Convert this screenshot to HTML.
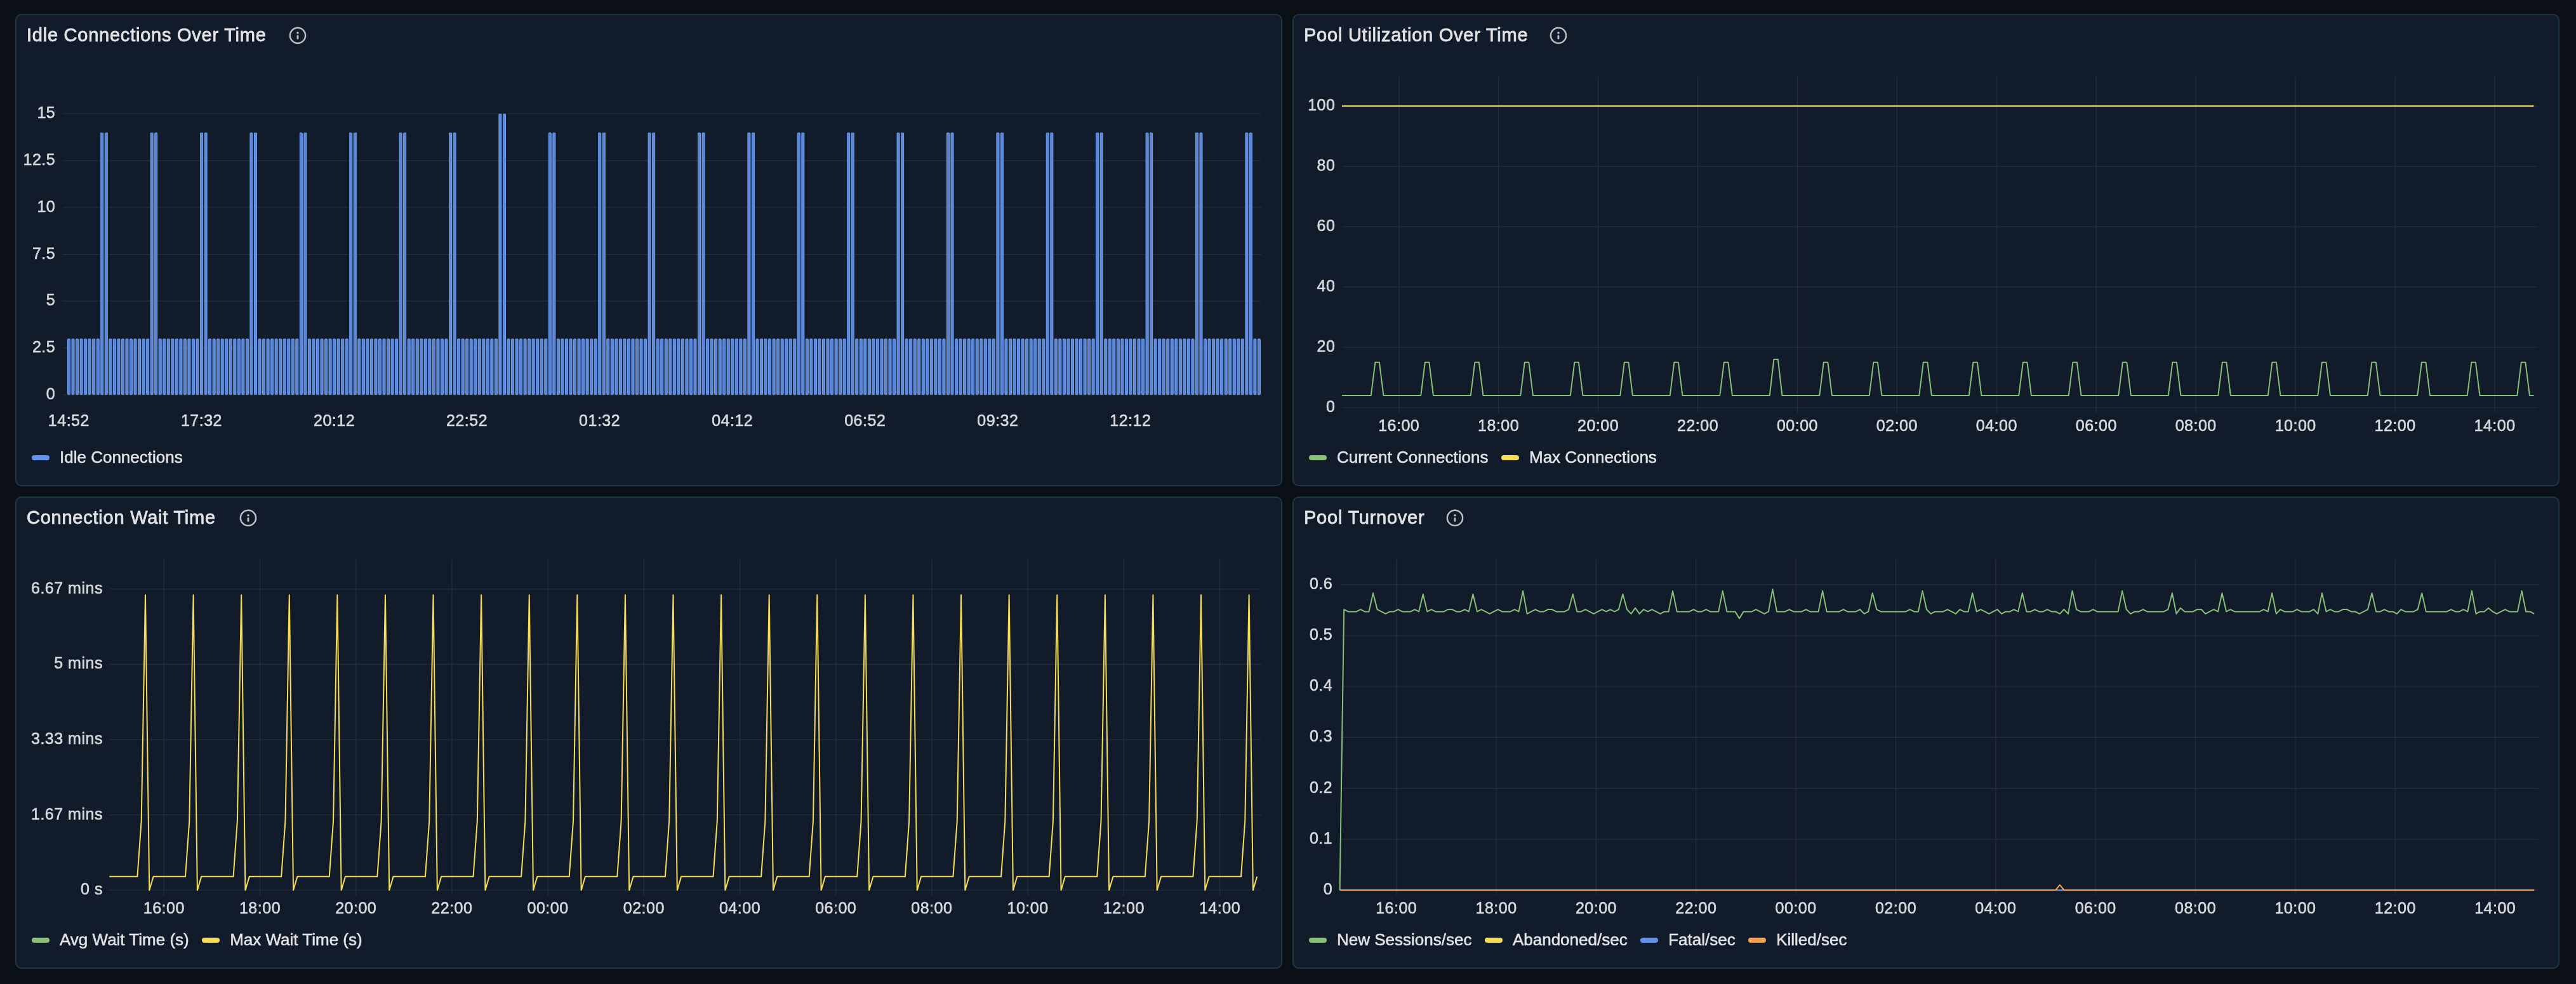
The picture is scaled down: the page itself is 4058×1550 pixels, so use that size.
<!DOCTYPE html><html><head><meta charset="utf-8"><title>Connection Pool Dashboard</title><style>
html,body{margin:0;padding:0}
body{width:4058px;height:1550px;background:#0b0f16;position:relative;overflow:hidden;font-family:"Liberation Sans",sans-serif}
.panel{position:absolute;width:1996px;height:744px;box-sizing:border-box;background:#121b2a;border:2px solid #1d3844;border-radius:10px}
.panel svg.chart{position:absolute;left:-2px;top:-2px;will-change:transform}
.title{position:absolute;left:16px;top:17px;height:30px;font-size:29px;line-height:29px;letter-spacing:0.76px;color:#e3e3e6;white-space:nowrap;-webkit-text-stroke:0.8px #e3e3e6;will-change:transform}
.legend{position:absolute;left:24px;top:678px;height:36px;display:flex;align-items:center;white-space:nowrap;will-change:transform}
.li{display:flex;align-items:center;margin-right:20.5px;font-size:26px;color:#e4e4e7;-webkit-text-stroke:0.5px #e4e4e7}
.sw{width:28px;height:8px;border-radius:4px;margin-right:16px;position:relative;top:1px}
.ax{font-size:25px;letter-spacing:0.5px;fill:#d8d9dc;stroke:#d8d9dc;stroke-width:0.6px}
</style></head><body><div class="panel" style="left:24px;top:22px"><svg class="chart" width="1996" height="744" viewBox="24 22 1996 744" font-family="Liberation Sans, sans-serif"><line x1="98" y1="622" x2="1986" y2="622" stroke="#252e3c" stroke-width="1.25"/><text x="87.2" y="629" text-anchor="end" class="ax">0</text><line x1="98" y1="548.2" x2="1986" y2="548.2" stroke="#252e3c" stroke-width="1.25"/><text x="87.2" y="555.2" text-anchor="end" class="ax">2.5</text><line x1="98" y1="474.4" x2="1986" y2="474.4" stroke="#252e3c" stroke-width="1.25"/><text x="87.2" y="481.4" text-anchor="end" class="ax">5</text><line x1="98" y1="400.6" x2="1986" y2="400.6" stroke="#252e3c" stroke-width="1.25"/><text x="87.2" y="407.6" text-anchor="end" class="ax">7.5</text><line x1="98" y1="326.8" x2="1986" y2="326.8" stroke="#252e3c" stroke-width="1.25"/><text x="87.2" y="333.8" text-anchor="end" class="ax">10</text><line x1="98" y1="253" x2="1986" y2="253" stroke="#252e3c" stroke-width="1.25"/><text x="87.2" y="260" text-anchor="end" class="ax">12.5</text><line x1="98" y1="179.2" x2="1986" y2="179.2" stroke="#252e3c" stroke-width="1.25"/><text x="87.2" y="186.2" text-anchor="end" class="ax">15</text><g fill="#5b86d3" stroke="#6fa0f7" stroke-width="1"><rect x="106.5" y="533.94" width="4" height="87.46" rx="0.6"/><rect x="113.03" y="533.94" width="4" height="87.46" rx="0.6"/><rect x="119.57" y="533.94" width="4" height="87.46" rx="0.6"/><rect x="126.1" y="533.94" width="4" height="87.46" rx="0.6"/><rect x="132.63" y="533.94" width="4" height="87.46" rx="0.6"/><rect x="139.16" y="533.94" width="4" height="87.46" rx="0.6"/><rect x="145.7" y="533.94" width="4" height="87.46" rx="0.6"/><rect x="152.23" y="533.94" width="4" height="87.46" rx="0.6"/><rect x="158.76" y="209.22" width="4" height="412.18" rx="0.6"/><rect x="165.3" y="209.22" width="4" height="412.18" rx="0.6"/><rect x="171.83" y="533.94" width="4" height="87.46" rx="0.6"/><rect x="178.36" y="533.94" width="4" height="87.46" rx="0.6"/><rect x="184.9" y="533.94" width="4" height="87.46" rx="0.6"/><rect x="191.43" y="533.94" width="4" height="87.46" rx="0.6"/><rect x="197.96" y="533.94" width="4" height="87.46" rx="0.6"/><rect x="204.5" y="533.94" width="4" height="87.46" rx="0.6"/><rect x="211.03" y="533.94" width="4" height="87.46" rx="0.6"/><rect x="217.56" y="533.94" width="4" height="87.46" rx="0.6"/><rect x="224.09" y="533.94" width="4" height="87.46" rx="0.6"/><rect x="230.63" y="533.94" width="4" height="87.46" rx="0.6"/><rect x="237.16" y="209.22" width="4" height="412.18" rx="0.6"/><rect x="243.69" y="209.22" width="4" height="412.18" rx="0.6"/><rect x="250.23" y="533.94" width="4" height="87.46" rx="0.6"/><rect x="256.76" y="533.94" width="4" height="87.46" rx="0.6"/><rect x="263.29" y="533.94" width="4" height="87.46" rx="0.6"/><rect x="269.83" y="533.94" width="4" height="87.46" rx="0.6"/><rect x="276.36" y="533.94" width="4" height="87.46" rx="0.6"/><rect x="282.89" y="533.94" width="4" height="87.46" rx="0.6"/><rect x="289.42" y="533.94" width="4" height="87.46" rx="0.6"/><rect x="295.96" y="533.94" width="4" height="87.46" rx="0.6"/><rect x="302.49" y="533.94" width="4" height="87.46" rx="0.6"/><rect x="309.02" y="533.94" width="4" height="87.46" rx="0.6"/><rect x="315.56" y="209.22" width="4" height="412.18" rx="0.6"/><rect x="322.09" y="209.22" width="4" height="412.18" rx="0.6"/><rect x="328.62" y="533.94" width="4" height="87.46" rx="0.6"/><rect x="335.15" y="533.94" width="4" height="87.46" rx="0.6"/><rect x="341.69" y="533.94" width="4" height="87.46" rx="0.6"/><rect x="348.22" y="533.94" width="4" height="87.46" rx="0.6"/><rect x="354.75" y="533.94" width="4" height="87.46" rx="0.6"/><rect x="361.29" y="533.94" width="4" height="87.46" rx="0.6"/><rect x="367.82" y="533.94" width="4" height="87.46" rx="0.6"/><rect x="374.35" y="533.94" width="4" height="87.46" rx="0.6"/><rect x="380.89" y="533.94" width="4" height="87.46" rx="0.6"/><rect x="387.42" y="533.94" width="4" height="87.46" rx="0.6"/><rect x="393.95" y="209.22" width="4" height="412.18" rx="0.6"/><rect x="400.49" y="209.22" width="4" height="412.18" rx="0.6"/><rect x="407.02" y="533.94" width="4" height="87.46" rx="0.6"/><rect x="413.55" y="533.94" width="4" height="87.46" rx="0.6"/><rect x="420.08" y="533.94" width="4" height="87.46" rx="0.6"/><rect x="426.62" y="533.94" width="4" height="87.46" rx="0.6"/><rect x="433.15" y="533.94" width="4" height="87.46" rx="0.6"/><rect x="439.68" y="533.94" width="4" height="87.46" rx="0.6"/><rect x="446.22" y="533.94" width="4" height="87.46" rx="0.6"/><rect x="452.75" y="533.94" width="4" height="87.46" rx="0.6"/><rect x="459.28" y="533.94" width="4" height="87.46" rx="0.6"/><rect x="465.81" y="533.94" width="4" height="87.46" rx="0.6"/><rect x="472.35" y="209.22" width="4" height="412.18" rx="0.6"/><rect x="478.88" y="209.22" width="4" height="412.18" rx="0.6"/><rect x="485.41" y="533.94" width="4" height="87.46" rx="0.6"/><rect x="491.95" y="533.94" width="4" height="87.46" rx="0.6"/><rect x="498.48" y="533.94" width="4" height="87.46" rx="0.6"/><rect x="505.01" y="533.94" width="4" height="87.46" rx="0.6"/><rect x="511.55" y="533.94" width="4" height="87.46" rx="0.6"/><rect x="518.08" y="533.94" width="4" height="87.46" rx="0.6"/><rect x="524.61" y="533.94" width="4" height="87.46" rx="0.6"/><rect x="531.14" y="533.94" width="4" height="87.46" rx="0.6"/><rect x="537.68" y="533.94" width="4" height="87.46" rx="0.6"/><rect x="544.21" y="533.94" width="4" height="87.46" rx="0.6"/><rect x="550.74" y="209.22" width="4" height="412.18" rx="0.6"/><rect x="557.28" y="209.22" width="4" height="412.18" rx="0.6"/><rect x="563.81" y="533.94" width="4" height="87.46" rx="0.6"/><rect x="570.34" y="533.94" width="4" height="87.46" rx="0.6"/><rect x="576.88" y="533.94" width="4" height="87.46" rx="0.6"/><rect x="583.41" y="533.94" width="4" height="87.46" rx="0.6"/><rect x="589.94" y="533.94" width="4" height="87.46" rx="0.6"/><rect x="596.48" y="533.94" width="4" height="87.46" rx="0.6"/><rect x="603.01" y="533.94" width="4" height="87.46" rx="0.6"/><rect x="609.54" y="533.94" width="4" height="87.46" rx="0.6"/><rect x="616.07" y="533.94" width="4" height="87.46" rx="0.6"/><rect x="622.61" y="533.94" width="4" height="87.46" rx="0.6"/><rect x="629.14" y="209.22" width="4" height="412.18" rx="0.6"/><rect x="635.67" y="209.22" width="4" height="412.18" rx="0.6"/><rect x="642.21" y="533.94" width="4" height="87.46" rx="0.6"/><rect x="648.74" y="533.94" width="4" height="87.46" rx="0.6"/><rect x="655.27" y="533.94" width="4" height="87.46" rx="0.6"/><rect x="661.81" y="533.94" width="4" height="87.46" rx="0.6"/><rect x="668.34" y="533.94" width="4" height="87.46" rx="0.6"/><rect x="674.87" y="533.94" width="4" height="87.46" rx="0.6"/><rect x="681.4" y="533.94" width="4" height="87.46" rx="0.6"/><rect x="687.94" y="533.94" width="4" height="87.46" rx="0.6"/><rect x="694.47" y="533.94" width="4" height="87.46" rx="0.6"/><rect x="701" y="533.94" width="4" height="87.46" rx="0.6"/><rect x="707.54" y="209.22" width="4" height="412.18" rx="0.6"/><rect x="714.07" y="209.22" width="4" height="412.18" rx="0.6"/><rect x="720.6" y="533.94" width="4" height="87.46" rx="0.6"/><rect x="727.13" y="533.94" width="4" height="87.46" rx="0.6"/><rect x="733.67" y="533.94" width="4" height="87.46" rx="0.6"/><rect x="740.2" y="533.94" width="4" height="87.46" rx="0.6"/><rect x="746.73" y="533.94" width="4" height="87.46" rx="0.6"/><rect x="753.27" y="533.94" width="4" height="87.46" rx="0.6"/><rect x="759.8" y="533.94" width="4" height="87.46" rx="0.6"/><rect x="766.33" y="533.94" width="4" height="87.46" rx="0.6"/><rect x="772.87" y="533.94" width="4" height="87.46" rx="0.6"/><rect x="779.4" y="533.94" width="4" height="87.46" rx="0.6"/><rect x="785.93" y="179.7" width="4" height="441.7" rx="0.6"/><rect x="792.47" y="179.7" width="4" height="441.7" rx="0.6"/><rect x="799" y="533.94" width="4" height="87.46" rx="0.6"/><rect x="805.53" y="533.94" width="4" height="87.46" rx="0.6"/><rect x="812.06" y="533.94" width="4" height="87.46" rx="0.6"/><rect x="818.6" y="533.94" width="4" height="87.46" rx="0.6"/><rect x="825.13" y="533.94" width="4" height="87.46" rx="0.6"/><rect x="831.66" y="533.94" width="4" height="87.46" rx="0.6"/><rect x="838.2" y="533.94" width="4" height="87.46" rx="0.6"/><rect x="844.73" y="533.94" width="4" height="87.46" rx="0.6"/><rect x="851.26" y="533.94" width="4" height="87.46" rx="0.6"/><rect x="857.8" y="533.94" width="4" height="87.46" rx="0.6"/><rect x="864.33" y="209.22" width="4" height="412.18" rx="0.6"/><rect x="870.86" y="209.22" width="4" height="412.18" rx="0.6"/><rect x="877.39" y="533.94" width="4" height="87.46" rx="0.6"/><rect x="883.93" y="533.94" width="4" height="87.46" rx="0.6"/><rect x="890.46" y="533.94" width="4" height="87.46" rx="0.6"/><rect x="896.99" y="533.94" width="4" height="87.46" rx="0.6"/><rect x="903.53" y="533.94" width="4" height="87.46" rx="0.6"/><rect x="910.06" y="533.94" width="4" height="87.46" rx="0.6"/><rect x="916.59" y="533.94" width="4" height="87.46" rx="0.6"/><rect x="923.12" y="533.94" width="4" height="87.46" rx="0.6"/><rect x="929.66" y="533.94" width="4" height="87.46" rx="0.6"/><rect x="936.19" y="533.94" width="4" height="87.46" rx="0.6"/><rect x="942.72" y="209.22" width="4" height="412.18" rx="0.6"/><rect x="949.26" y="209.22" width="4" height="412.18" rx="0.6"/><rect x="955.79" y="533.94" width="4" height="87.46" rx="0.6"/><rect x="962.32" y="533.94" width="4" height="87.46" rx="0.6"/><rect x="968.86" y="533.94" width="4" height="87.46" rx="0.6"/><rect x="975.39" y="533.94" width="4" height="87.46" rx="0.6"/><rect x="981.92" y="533.94" width="4" height="87.46" rx="0.6"/><rect x="988.46" y="533.94" width="4" height="87.46" rx="0.6"/><rect x="994.99" y="533.94" width="4" height="87.46" rx="0.6"/><rect x="1001.52" y="533.94" width="4" height="87.46" rx="0.6"/><rect x="1008.05" y="533.94" width="4" height="87.46" rx="0.6"/><rect x="1014.59" y="533.94" width="4" height="87.46" rx="0.6"/><rect x="1021.12" y="209.22" width="4" height="412.18" rx="0.6"/><rect x="1027.65" y="209.22" width="4" height="412.18" rx="0.6"/><rect x="1034.19" y="533.94" width="4" height="87.46" rx="0.6"/><rect x="1040.72" y="533.94" width="4" height="87.46" rx="0.6"/><rect x="1047.25" y="533.94" width="4" height="87.46" rx="0.6"/><rect x="1053.79" y="533.94" width="4" height="87.46" rx="0.6"/><rect x="1060.32" y="533.94" width="4" height="87.46" rx="0.6"/><rect x="1066.85" y="533.94" width="4" height="87.46" rx="0.6"/><rect x="1073.38" y="533.94" width="4" height="87.46" rx="0.6"/><rect x="1079.92" y="533.94" width="4" height="87.46" rx="0.6"/><rect x="1086.45" y="533.94" width="4" height="87.46" rx="0.6"/><rect x="1092.98" y="533.94" width="4" height="87.46" rx="0.6"/><rect x="1099.52" y="209.22" width="4" height="412.18" rx="0.6"/><rect x="1106.05" y="209.22" width="4" height="412.18" rx="0.6"/><rect x="1112.58" y="533.94" width="4" height="87.46" rx="0.6"/><rect x="1119.12" y="533.94" width="4" height="87.46" rx="0.6"/><rect x="1125.65" y="533.94" width="4" height="87.46" rx="0.6"/><rect x="1132.18" y="533.94" width="4" height="87.46" rx="0.6"/><rect x="1138.71" y="533.94" width="4" height="87.46" rx="0.6"/><rect x="1145.25" y="533.94" width="4" height="87.46" rx="0.6"/><rect x="1151.78" y="533.94" width="4" height="87.46" rx="0.6"/><rect x="1158.31" y="533.94" width="4" height="87.46" rx="0.6"/><rect x="1164.85" y="533.94" width="4" height="87.46" rx="0.6"/><rect x="1171.38" y="533.94" width="4" height="87.46" rx="0.6"/><rect x="1177.91" y="209.22" width="4" height="412.18" rx="0.6"/><rect x="1184.45" y="209.22" width="4" height="412.18" rx="0.6"/><rect x="1190.98" y="533.94" width="4" height="87.46" rx="0.6"/><rect x="1197.51" y="533.94" width="4" height="87.46" rx="0.6"/><rect x="1204.04" y="533.94" width="4" height="87.46" rx="0.6"/><rect x="1210.58" y="533.94" width="4" height="87.46" rx="0.6"/><rect x="1217.11" y="533.94" width="4" height="87.46" rx="0.6"/><rect x="1223.64" y="533.94" width="4" height="87.46" rx="0.6"/><rect x="1230.18" y="533.94" width="4" height="87.46" rx="0.6"/><rect x="1236.71" y="533.94" width="4" height="87.46" rx="0.6"/><rect x="1243.24" y="533.94" width="4" height="87.46" rx="0.6"/><rect x="1249.78" y="533.94" width="4" height="87.46" rx="0.6"/><rect x="1256.31" y="209.22" width="4" height="412.18" rx="0.6"/><rect x="1262.84" y="209.22" width="4" height="412.18" rx="0.6"/><rect x="1269.37" y="533.94" width="4" height="87.46" rx="0.6"/><rect x="1275.91" y="533.94" width="4" height="87.46" rx="0.6"/><rect x="1282.44" y="533.94" width="4" height="87.46" rx="0.6"/><rect x="1288.97" y="533.94" width="4" height="87.46" rx="0.6"/><rect x="1295.51" y="533.94" width="4" height="87.46" rx="0.6"/><rect x="1302.04" y="533.94" width="4" height="87.46" rx="0.6"/><rect x="1308.57" y="533.94" width="4" height="87.46" rx="0.6"/><rect x="1315.11" y="533.94" width="4" height="87.46" rx="0.6"/><rect x="1321.64" y="533.94" width="4" height="87.46" rx="0.6"/><rect x="1328.17" y="533.94" width="4" height="87.46" rx="0.6"/><rect x="1334.7" y="209.22" width="4" height="412.18" rx="0.6"/><rect x="1341.24" y="209.22" width="4" height="412.18" rx="0.6"/><rect x="1347.77" y="533.94" width="4" height="87.46" rx="0.6"/><rect x="1354.3" y="533.94" width="4" height="87.46" rx="0.6"/><rect x="1360.84" y="533.94" width="4" height="87.46" rx="0.6"/><rect x="1367.37" y="533.94" width="4" height="87.46" rx="0.6"/><rect x="1373.9" y="533.94" width="4" height="87.46" rx="0.6"/><rect x="1380.44" y="533.94" width="4" height="87.46" rx="0.6"/><rect x="1386.97" y="533.94" width="4" height="87.46" rx="0.6"/><rect x="1393.5" y="533.94" width="4" height="87.46" rx="0.6"/><rect x="1400.03" y="533.94" width="4" height="87.46" rx="0.6"/><rect x="1406.57" y="533.94" width="4" height="87.46" rx="0.6"/><rect x="1413.1" y="209.22" width="4" height="412.18" rx="0.6"/><rect x="1419.63" y="209.22" width="4" height="412.18" rx="0.6"/><rect x="1426.17" y="533.94" width="4" height="87.46" rx="0.6"/><rect x="1432.7" y="533.94" width="4" height="87.46" rx="0.6"/><rect x="1439.23" y="533.94" width="4" height="87.46" rx="0.6"/><rect x="1445.77" y="533.94" width="4" height="87.46" rx="0.6"/><rect x="1452.3" y="533.94" width="4" height="87.46" rx="0.6"/><rect x="1458.83" y="533.94" width="4" height="87.46" rx="0.6"/><rect x="1465.36" y="533.94" width="4" height="87.46" rx="0.6"/><rect x="1471.9" y="533.94" width="4" height="87.46" rx="0.6"/><rect x="1478.43" y="533.94" width="4" height="87.46" rx="0.6"/><rect x="1484.96" y="533.94" width="4" height="87.46" rx="0.6"/><rect x="1491.5" y="209.22" width="4" height="412.18" rx="0.6"/><rect x="1498.03" y="209.22" width="4" height="412.18" rx="0.6"/><rect x="1504.56" y="533.94" width="4" height="87.46" rx="0.6"/><rect x="1511.1" y="533.94" width="4" height="87.46" rx="0.6"/><rect x="1517.63" y="533.94" width="4" height="87.46" rx="0.6"/><rect x="1524.16" y="533.94" width="4" height="87.46" rx="0.6"/><rect x="1530.69" y="533.94" width="4" height="87.46" rx="0.6"/><rect x="1537.23" y="533.94" width="4" height="87.46" rx="0.6"/><rect x="1543.76" y="533.94" width="4" height="87.46" rx="0.6"/><rect x="1550.29" y="533.94" width="4" height="87.46" rx="0.6"/><rect x="1556.83" y="533.94" width="4" height="87.46" rx="0.6"/><rect x="1563.36" y="533.94" width="4" height="87.46" rx="0.6"/><rect x="1569.89" y="209.22" width="4" height="412.18" rx="0.6"/><rect x="1576.43" y="209.22" width="4" height="412.18" rx="0.6"/><rect x="1582.96" y="533.94" width="4" height="87.46" rx="0.6"/><rect x="1589.49" y="533.94" width="4" height="87.46" rx="0.6"/><rect x="1596.02" y="533.94" width="4" height="87.46" rx="0.6"/><rect x="1602.56" y="533.94" width="4" height="87.46" rx="0.6"/><rect x="1609.09" y="533.94" width="4" height="87.46" rx="0.6"/><rect x="1615.62" y="533.94" width="4" height="87.46" rx="0.6"/><rect x="1622.16" y="533.94" width="4" height="87.46" rx="0.6"/><rect x="1628.69" y="533.94" width="4" height="87.46" rx="0.6"/><rect x="1635.22" y="533.94" width="4" height="87.46" rx="0.6"/><rect x="1641.76" y="533.94" width="4" height="87.46" rx="0.6"/><rect x="1648.29" y="209.22" width="4" height="412.18" rx="0.6"/><rect x="1654.82" y="209.22" width="4" height="412.18" rx="0.6"/><rect x="1661.35" y="533.94" width="4" height="87.46" rx="0.6"/><rect x="1667.89" y="533.94" width="4" height="87.46" rx="0.6"/><rect x="1674.42" y="533.94" width="4" height="87.46" rx="0.6"/><rect x="1680.95" y="533.94" width="4" height="87.46" rx="0.6"/><rect x="1687.49" y="533.94" width="4" height="87.46" rx="0.6"/><rect x="1694.02" y="533.94" width="4" height="87.46" rx="0.6"/><rect x="1700.55" y="533.94" width="4" height="87.46" rx="0.6"/><rect x="1707.09" y="533.94" width="4" height="87.46" rx="0.6"/><rect x="1713.62" y="533.94" width="4" height="87.46" rx="0.6"/><rect x="1720.15" y="533.94" width="4" height="87.46" rx="0.6"/><rect x="1726.68" y="209.22" width="4" height="412.18" rx="0.6"/><rect x="1733.22" y="209.22" width="4" height="412.18" rx="0.6"/><rect x="1739.75" y="533.94" width="4" height="87.46" rx="0.6"/><rect x="1746.28" y="533.94" width="4" height="87.46" rx="0.6"/><rect x="1752.82" y="533.94" width="4" height="87.46" rx="0.6"/><rect x="1759.35" y="533.94" width="4" height="87.46" rx="0.6"/><rect x="1765.88" y="533.94" width="4" height="87.46" rx="0.6"/><rect x="1772.42" y="533.94" width="4" height="87.46" rx="0.6"/><rect x="1778.95" y="533.94" width="4" height="87.46" rx="0.6"/><rect x="1785.48" y="533.94" width="4" height="87.46" rx="0.6"/><rect x="1792.01" y="533.94" width="4" height="87.46" rx="0.6"/><rect x="1798.55" y="533.94" width="4" height="87.46" rx="0.6"/><rect x="1805.08" y="209.22" width="4" height="412.18" rx="0.6"/><rect x="1811.61" y="209.22" width="4" height="412.18" rx="0.6"/><rect x="1818.15" y="533.94" width="4" height="87.46" rx="0.6"/><rect x="1824.68" y="533.94" width="4" height="87.46" rx="0.6"/><rect x="1831.21" y="533.94" width="4" height="87.46" rx="0.6"/><rect x="1837.75" y="533.94" width="4" height="87.46" rx="0.6"/><rect x="1844.28" y="533.94" width="4" height="87.46" rx="0.6"/><rect x="1850.81" y="533.94" width="4" height="87.46" rx="0.6"/><rect x="1857.34" y="533.94" width="4" height="87.46" rx="0.6"/><rect x="1863.88" y="533.94" width="4" height="87.46" rx="0.6"/><rect x="1870.41" y="533.94" width="4" height="87.46" rx="0.6"/><rect x="1876.94" y="533.94" width="4" height="87.46" rx="0.6"/><rect x="1883.48" y="209.22" width="4" height="412.18" rx="0.6"/><rect x="1890.01" y="209.22" width="4" height="412.18" rx="0.6"/><rect x="1896.54" y="533.94" width="4" height="87.46" rx="0.6"/><rect x="1903.08" y="533.94" width="4" height="87.46" rx="0.6"/><rect x="1909.61" y="533.94" width="4" height="87.46" rx="0.6"/><rect x="1916.14" y="533.94" width="4" height="87.46" rx="0.6"/><rect x="1922.67" y="533.94" width="4" height="87.46" rx="0.6"/><rect x="1929.21" y="533.94" width="4" height="87.46" rx="0.6"/><rect x="1935.74" y="533.94" width="4" height="87.46" rx="0.6"/><rect x="1942.27" y="533.94" width="4" height="87.46" rx="0.6"/><rect x="1948.81" y="533.94" width="4" height="87.46" rx="0.6"/><rect x="1955.34" y="533.94" width="4" height="87.46" rx="0.6"/><rect x="1961.87" y="209.22" width="4" height="412.18" rx="0.6"/><rect x="1968.41" y="209.22" width="4" height="412.18" rx="0.6"/><rect x="1974.94" y="533.94" width="4" height="87.46" rx="0.6"/><rect x="1981.47" y="533.94" width="4" height="87.46" rx="0.6"/></g><text x="108.4" y="671" text-anchor="middle" class="ax">14:52</text><text x="317.46" y="671" text-anchor="middle" class="ax">17:32</text><text x="526.52" y="671" text-anchor="middle" class="ax">20:12</text><text x="735.58" y="671" text-anchor="middle" class="ax">22:52</text><text x="944.64" y="671" text-anchor="middle" class="ax">01:32</text><text x="1153.7" y="671" text-anchor="middle" class="ax">04:12</text><text x="1362.76" y="671" text-anchor="middle" class="ax">06:52</text><text x="1571.82" y="671" text-anchor="middle" class="ax">09:32</text><text x="1780.88" y="671" text-anchor="middle" class="ax">12:12</text><g class="info"><circle cx="469" cy="55.9" r="12.1" fill="none" stroke="#bcbec3" stroke-width="2.5"/><circle cx="469" cy="51.699999999999996" r="1.75" fill="#bcbec3"/><rect x="467.5" y="55.3" width="2.9" height="6.6" rx="1.4" fill="#bcbec3"/></g></svg><div class="title">Idle Connections Over Time</div><div class="legend"><div class="li"><span class="sw" style="background:#6494f0"></span>Idle Connections</div></div></div><div class="panel" style="left:2036px;top:22px"><svg class="chart" width="1996" height="744" viewBox="2036 22 1996 744" font-family="Liberation Sans, sans-serif"><line x1="2203.7" y1="121" x2="2203.7" y2="650" stroke="#252e3c" stroke-width="1.25"/><line x1="2360.64" y1="121" x2="2360.64" y2="650" stroke="#252e3c" stroke-width="1.25"/><line x1="2517.58" y1="121" x2="2517.58" y2="650" stroke="#252e3c" stroke-width="1.25"/><line x1="2674.52" y1="121" x2="2674.52" y2="650" stroke="#252e3c" stroke-width="1.25"/><line x1="2831.46" y1="121" x2="2831.46" y2="650" stroke="#252e3c" stroke-width="1.25"/><line x1="2988.4" y1="121" x2="2988.4" y2="650" stroke="#252e3c" stroke-width="1.25"/><line x1="3145.34" y1="121" x2="3145.34" y2="650" stroke="#252e3c" stroke-width="1.25"/><line x1="3302.28" y1="121" x2="3302.28" y2="650" stroke="#252e3c" stroke-width="1.25"/><line x1="3459.22" y1="121" x2="3459.22" y2="650" stroke="#252e3c" stroke-width="1.25"/><line x1="3616.16" y1="121" x2="3616.16" y2="650" stroke="#252e3c" stroke-width="1.25"/><line x1="3773.1" y1="121" x2="3773.1" y2="650" stroke="#252e3c" stroke-width="1.25"/><line x1="3930.04" y1="121" x2="3930.04" y2="650" stroke="#252e3c" stroke-width="1.25"/><line x1="2114" y1="642" x2="3998" y2="642" stroke="#252e3c" stroke-width="1.25"/><text x="2103.4" y="649" text-anchor="end" class="ax">0</text><line x1="2114" y1="547" x2="3998" y2="547" stroke="#252e3c" stroke-width="1.25"/><text x="2103.4" y="554" text-anchor="end" class="ax">20</text><line x1="2114" y1="452" x2="3998" y2="452" stroke="#252e3c" stroke-width="1.25"/><text x="2103.4" y="459" text-anchor="end" class="ax">40</text><line x1="2114" y1="357" x2="3998" y2="357" stroke="#252e3c" stroke-width="1.25"/><text x="2103.4" y="364" text-anchor="end" class="ax">60</text><line x1="2114" y1="262" x2="3998" y2="262" stroke="#252e3c" stroke-width="1.25"/><text x="2103.4" y="269" text-anchor="end" class="ax">80</text><line x1="2114" y1="167" x2="3998" y2="167" stroke="#252e3c" stroke-width="1.25"/><text x="2103.4" y="174" text-anchor="end" class="ax">100</text><path d="M2114 623 L2120.54 623 L2127.08 623 L2133.62 623 L2140.17 623 L2146.71 623 L2153.25 623 L2159.79 623 L2166.33 570.75 L2172.88 570.75 L2179.42 623 L2185.96 623 L2192.5 623 L2199.04 623 L2205.58 623 L2212.12 623 L2218.67 623 L2225.21 623 L2231.75 623 L2238.29 623 L2244.83 570.75 L2251.38 570.75 L2257.92 623 L2264.46 623 L2271 623 L2277.54 623 L2284.08 623 L2290.62 623 L2297.17 623 L2303.71 623 L2310.25 623 L2316.79 623 L2323.33 570.75 L2329.88 570.75 L2336.42 623 L2342.96 623 L2349.5 623 L2356.04 623 L2362.58 623 L2369.12 623 L2375.67 623 L2382.21 623 L2388.75 623 L2395.29 623 L2401.83 570.75 L2408.38 570.75 L2414.92 623 L2421.46 623 L2428 623 L2434.54 623 L2441.08 623 L2447.62 623 L2454.17 623 L2460.71 623 L2467.25 623 L2473.79 623 L2480.33 570.75 L2486.88 570.75 L2493.42 623 L2499.96 623 L2506.5 623 L2513.04 623 L2519.58 623 L2526.12 623 L2532.67 623 L2539.21 623 L2545.75 623 L2552.29 623 L2558.83 570.75 L2565.38 570.75 L2571.92 623 L2578.46 623 L2585 623 L2591.54 623 L2598.08 623 L2604.62 623 L2611.17 623 L2617.71 623 L2624.25 623 L2630.79 623 L2637.33 570.75 L2643.88 570.75 L2650.42 623 L2656.96 623 L2663.5 623 L2670.04 623 L2676.58 623 L2683.12 623 L2689.67 623 L2696.21 623 L2702.75 623 L2709.29 623 L2715.83 570.75 L2722.38 570.75 L2728.92 623 L2735.46 623 L2742 623 L2748.54 623 L2755.08 623 L2761.62 623 L2768.17 623 L2774.71 623 L2781.25 623 L2787.79 623 L2794.33 566 L2800.88 566 L2807.42 623 L2813.96 623 L2820.5 623 L2827.04 623 L2833.58 623 L2840.12 623 L2846.67 623 L2853.21 623 L2859.75 623 L2866.29 623 L2872.83 570.75 L2879.38 570.75 L2885.92 623 L2892.46 623 L2899 623 L2905.54 623 L2912.08 623 L2918.62 623 L2925.17 623 L2931.71 623 L2938.25 623 L2944.79 623 L2951.33 570.75 L2957.88 570.75 L2964.42 623 L2970.96 623 L2977.5 623 L2984.04 623 L2990.58 623 L2997.12 623 L3003.67 623 L3010.21 623 L3016.75 623 L3023.29 623 L3029.83 570.75 L3036.38 570.75 L3042.92 623 L3049.46 623 L3056 623 L3062.54 623 L3069.08 623 L3075.62 623 L3082.17 623 L3088.71 623 L3095.25 623 L3101.79 623 L3108.33 570.75 L3114.88 570.75 L3121.42 623 L3127.96 623 L3134.5 623 L3141.04 623 L3147.58 623 L3154.12 623 L3160.67 623 L3167.21 623 L3173.75 623 L3180.29 623 L3186.83 570.75 L3193.38 570.75 L3199.92 623 L3206.46 623 L3213 623 L3219.54 623 L3226.08 623 L3232.62 623 L3239.17 623 L3245.71 623 L3252.25 623 L3258.79 623 L3265.33 570.75 L3271.88 570.75 L3278.42 623 L3284.96 623 L3291.5 623 L3298.04 623 L3304.58 623 L3311.12 623 L3317.67 623 L3324.21 623 L3330.75 623 L3337.29 623 L3343.83 570.75 L3350.38 570.75 L3356.92 623 L3363.46 623 L3370 623 L3376.54 623 L3383.08 623 L3389.62 623 L3396.17 623 L3402.71 623 L3409.25 623 L3415.79 623 L3422.33 570.75 L3428.88 570.75 L3435.42 623 L3441.96 623 L3448.5 623 L3455.04 623 L3461.58 623 L3468.12 623 L3474.67 623 L3481.21 623 L3487.75 623 L3494.29 623 L3500.83 570.75 L3507.38 570.75 L3513.92 623 L3520.46 623 L3527 623 L3533.54 623 L3540.08 623 L3546.62 623 L3553.17 623 L3559.71 623 L3566.25 623 L3572.79 623 L3579.33 570.75 L3585.88 570.75 L3592.42 623 L3598.96 623 L3605.5 623 L3612.04 623 L3618.58 623 L3625.12 623 L3631.67 623 L3638.21 623 L3644.75 623 L3651.29 623 L3657.83 570.75 L3664.38 570.75 L3670.92 623 L3677.46 623 L3684 623 L3690.54 623 L3697.08 623 L3703.62 623 L3710.17 623 L3716.71 623 L3723.25 623 L3729.79 623 L3736.33 570.75 L3742.88 570.75 L3749.42 623 L3755.96 623 L3762.5 623 L3769.04 623 L3775.58 623 L3782.12 623 L3788.67 623 L3795.21 623 L3801.75 623 L3808.29 623 L3814.83 570.75 L3821.38 570.75 L3827.92 623 L3834.46 623 L3841 623 L3847.54 623 L3854.08 623 L3860.62 623 L3867.17 623 L3873.71 623 L3880.25 623 L3886.79 623 L3893.33 570.75 L3899.88 570.75 L3906.42 623 L3912.96 623 L3919.5 623 L3926.04 623 L3932.58 623 L3939.12 623 L3945.67 623 L3952.21 623 L3958.75 623 L3965.29 623 L3971.83 570.75 L3978.38 570.75 L3984.92 623 L3991.46 623" fill="none" stroke="#87c076" stroke-width="2" stroke-linejoin="round"/><path d="M2114 167 L2120.54 167 L2127.08 167 L2133.62 167 L2140.17 167 L2146.71 167 L2153.25 167 L2159.79 167 L2166.33 167 L2172.88 167 L2179.42 167 L2185.96 167 L2192.5 167 L2199.04 167 L2205.58 167 L2212.12 167 L2218.67 167 L2225.21 167 L2231.75 167 L2238.29 167 L2244.83 167 L2251.38 167 L2257.92 167 L2264.46 167 L2271 167 L2277.54 167 L2284.08 167 L2290.62 167 L2297.17 167 L2303.71 167 L2310.25 167 L2316.79 167 L2323.33 167 L2329.88 167 L2336.42 167 L2342.96 167 L2349.5 167 L2356.04 167 L2362.58 167 L2369.12 167 L2375.67 167 L2382.21 167 L2388.75 167 L2395.29 167 L2401.83 167 L2408.38 167 L2414.92 167 L2421.46 167 L2428 167 L2434.54 167 L2441.08 167 L2447.62 167 L2454.17 167 L2460.71 167 L2467.25 167 L2473.79 167 L2480.33 167 L2486.88 167 L2493.42 167 L2499.96 167 L2506.5 167 L2513.04 167 L2519.58 167 L2526.12 167 L2532.67 167 L2539.21 167 L2545.75 167 L2552.29 167 L2558.83 167 L2565.38 167 L2571.92 167 L2578.46 167 L2585 167 L2591.54 167 L2598.08 167 L2604.62 167 L2611.17 167 L2617.71 167 L2624.25 167 L2630.79 167 L2637.33 167 L2643.88 167 L2650.42 167 L2656.96 167 L2663.5 167 L2670.04 167 L2676.58 167 L2683.12 167 L2689.67 167 L2696.21 167 L2702.75 167 L2709.29 167 L2715.83 167 L2722.38 167 L2728.92 167 L2735.46 167 L2742 167 L2748.54 167 L2755.08 167 L2761.62 167 L2768.17 167 L2774.71 167 L2781.25 167 L2787.79 167 L2794.33 167 L2800.88 167 L2807.42 167 L2813.96 167 L2820.5 167 L2827.04 167 L2833.58 167 L2840.12 167 L2846.67 167 L2853.21 167 L2859.75 167 L2866.29 167 L2872.83 167 L2879.38 167 L2885.92 167 L2892.46 167 L2899 167 L2905.54 167 L2912.08 167 L2918.62 167 L2925.17 167 L2931.71 167 L2938.25 167 L2944.79 167 L2951.33 167 L2957.88 167 L2964.42 167 L2970.96 167 L2977.5 167 L2984.04 167 L2990.58 167 L2997.12 167 L3003.67 167 L3010.21 167 L3016.75 167 L3023.29 167 L3029.83 167 L3036.38 167 L3042.92 167 L3049.46 167 L3056 167 L3062.54 167 L3069.08 167 L3075.62 167 L3082.17 167 L3088.71 167 L3095.25 167 L3101.79 167 L3108.33 167 L3114.88 167 L3121.42 167 L3127.96 167 L3134.5 167 L3141.04 167 L3147.58 167 L3154.12 167 L3160.67 167 L3167.21 167 L3173.75 167 L3180.29 167 L3186.83 167 L3193.38 167 L3199.92 167 L3206.46 167 L3213 167 L3219.54 167 L3226.08 167 L3232.62 167 L3239.17 167 L3245.71 167 L3252.25 167 L3258.79 167 L3265.33 167 L3271.88 167 L3278.42 167 L3284.96 167 L3291.5 167 L3298.04 167 L3304.58 167 L3311.12 167 L3317.67 167 L3324.21 167 L3330.75 167 L3337.29 167 L3343.83 167 L3350.38 167 L3356.92 167 L3363.46 167 L3370 167 L3376.54 167 L3383.08 167 L3389.62 167 L3396.17 167 L3402.71 167 L3409.25 167 L3415.79 167 L3422.33 167 L3428.88 167 L3435.42 167 L3441.96 167 L3448.5 167 L3455.04 167 L3461.58 167 L3468.12 167 L3474.67 167 L3481.21 167 L3487.75 167 L3494.29 167 L3500.83 167 L3507.38 167 L3513.92 167 L3520.46 167 L3527 167 L3533.54 167 L3540.08 167 L3546.62 167 L3553.17 167 L3559.71 167 L3566.25 167 L3572.79 167 L3579.33 167 L3585.88 167 L3592.42 167 L3598.96 167 L3605.5 167 L3612.04 167 L3618.58 167 L3625.12 167 L3631.67 167 L3638.21 167 L3644.75 167 L3651.29 167 L3657.83 167 L3664.38 167 L3670.92 167 L3677.46 167 L3684 167 L3690.54 167 L3697.08 167 L3703.62 167 L3710.17 167 L3716.71 167 L3723.25 167 L3729.79 167 L3736.33 167 L3742.88 167 L3749.42 167 L3755.96 167 L3762.5 167 L3769.04 167 L3775.58 167 L3782.12 167 L3788.67 167 L3795.21 167 L3801.75 167 L3808.29 167 L3814.83 167 L3821.38 167 L3827.92 167 L3834.46 167 L3841 167 L3847.54 167 L3854.08 167 L3860.62 167 L3867.17 167 L3873.71 167 L3880.25 167 L3886.79 167 L3893.33 167 L3899.88 167 L3906.42 167 L3912.96 167 L3919.5 167 L3926.04 167 L3932.58 167 L3939.12 167 L3945.67 167 L3952.21 167 L3958.75 167 L3965.29 167 L3971.83 167 L3978.38 167 L3984.92 167 L3991.46 167" fill="none" stroke="#f5de55" stroke-width="2" stroke-linejoin="round"/><text x="2203.7" y="679" text-anchor="middle" class="ax">16:00</text><text x="2360.64" y="679" text-anchor="middle" class="ax">18:00</text><text x="2517.58" y="679" text-anchor="middle" class="ax">20:00</text><text x="2674.52" y="679" text-anchor="middle" class="ax">22:00</text><text x="2831.46" y="679" text-anchor="middle" class="ax">00:00</text><text x="2988.4" y="679" text-anchor="middle" class="ax">02:00</text><text x="3145.34" y="679" text-anchor="middle" class="ax">04:00</text><text x="3302.28" y="679" text-anchor="middle" class="ax">06:00</text><text x="3459.22" y="679" text-anchor="middle" class="ax">08:00</text><text x="3616.16" y="679" text-anchor="middle" class="ax">10:00</text><text x="3773.1" y="679" text-anchor="middle" class="ax">12:00</text><text x="3930.04" y="679" text-anchor="middle" class="ax">14:00</text><g class="info"><circle cx="2455" cy="55.9" r="12.1" fill="none" stroke="#bcbec3" stroke-width="2.5"/><circle cx="2455" cy="51.699999999999996" r="1.75" fill="#bcbec3"/><rect x="2453.5" y="55.3" width="2.9" height="6.6" rx="1.4" fill="#bcbec3"/></g></svg><div class="title">Pool Utilization Over Time</div><div class="legend"><div class="li"><span class="sw" style="background:#87c076"></span>Current Connections</div><div class="li"><span class="sw" style="background:#f5de55"></span>Max Connections</div></div></div><div class="panel" style="left:24px;top:782px"><svg class="chart" width="1996" height="744" viewBox="24 782 1996 744" font-family="Liberation Sans, sans-serif"><line x1="258.3" y1="880.5" x2="258.3" y2="1410.5" stroke="#252e3c" stroke-width="1.25"/><line x1="409.5" y1="880.5" x2="409.5" y2="1410.5" stroke="#252e3c" stroke-width="1.25"/><line x1="560.7" y1="880.5" x2="560.7" y2="1410.5" stroke="#252e3c" stroke-width="1.25"/><line x1="711.9" y1="880.5" x2="711.9" y2="1410.5" stroke="#252e3c" stroke-width="1.25"/><line x1="863.1" y1="880.5" x2="863.1" y2="1410.5" stroke="#252e3c" stroke-width="1.25"/><line x1="1014.3" y1="880.5" x2="1014.3" y2="1410.5" stroke="#252e3c" stroke-width="1.25"/><line x1="1165.5" y1="880.5" x2="1165.5" y2="1410.5" stroke="#252e3c" stroke-width="1.25"/><line x1="1316.7" y1="880.5" x2="1316.7" y2="1410.5" stroke="#252e3c" stroke-width="1.25"/><line x1="1467.9" y1="880.5" x2="1467.9" y2="1410.5" stroke="#252e3c" stroke-width="1.25"/><line x1="1619.1" y1="880.5" x2="1619.1" y2="1410.5" stroke="#252e3c" stroke-width="1.25"/><line x1="1770.3" y1="880.5" x2="1770.3" y2="1410.5" stroke="#252e3c" stroke-width="1.25"/><line x1="1921.5" y1="880.5" x2="1921.5" y2="1410.5" stroke="#252e3c" stroke-width="1.25"/><line x1="172.3" y1="1402.2" x2="1986.5" y2="1402.2" stroke="#252e3c" stroke-width="1.25"/><text x="161.9" y="1409.2" text-anchor="end" class="ax">0 s</text><line x1="172.3" y1="1283.6" x2="1986.5" y2="1283.6" stroke="#252e3c" stroke-width="1.25"/><text x="161.9" y="1290.6" text-anchor="end" class="ax">1.67 mins</text><line x1="172.3" y1="1165" x2="1986.5" y2="1165" stroke="#252e3c" stroke-width="1.25"/><text x="161.9" y="1172" text-anchor="end" class="ax">3.33 mins</text><line x1="172.3" y1="1046.4" x2="1986.5" y2="1046.4" stroke="#252e3c" stroke-width="1.25"/><text x="161.9" y="1053.4" text-anchor="end" class="ax">5 mins</text><line x1="172.3" y1="927.8" x2="1986.5" y2="927.8" stroke="#252e3c" stroke-width="1.25"/><text x="161.9" y="934.8" text-anchor="end" class="ax">6.67 mins</text><path d="M172.3 1380.85 L178.6 1380.85 L184.9 1380.85 L191.2 1380.85 L197.5 1380.85 L203.8 1380.85 L210.1 1380.85 L216.4 1380.85 L222.69 1293.09 L228.99 937.29 L235.29 1402.2 L241.59 1380.85 L247.89 1380.85 L254.19 1380.85 L260.49 1380.85 L266.79 1380.85 L273.09 1380.85 L279.39 1380.85 L285.69 1380.85 L291.99 1380.85 L298.29 1293.09 L304.59 937.29 L310.88 1402.2 L317.18 1380.85 L323.48 1380.85 L329.78 1380.85 L336.08 1380.85 L342.38 1380.85 L348.68 1380.85 L354.98 1380.85 L361.28 1380.85 L367.58 1380.85 L373.88 1293.09 L380.18 937.29 L386.48 1402.2 L392.78 1380.85 L399.08 1380.85 L405.37 1380.85 L411.67 1380.85 L417.97 1380.85 L424.27 1380.85 L430.57 1380.85 L436.87 1380.85 L443.17 1380.85 L449.47 1293.09 L455.77 937.29 L462.07 1402.2 L468.37 1380.85 L474.67 1380.85 L480.97 1380.85 L487.27 1380.85 L493.56 1380.85 L499.86 1380.85 L506.16 1380.85 L512.46 1380.85 L518.76 1380.85 L525.06 1293.09 L531.36 937.29 L537.66 1402.2 L543.96 1380.85 L550.26 1380.85 L556.56 1380.85 L562.86 1380.85 L569.16 1380.85 L575.46 1380.85 L581.75 1380.85 L588.05 1380.85 L594.35 1380.85 L600.65 1293.09 L606.95 937.29 L613.25 1402.2 L619.55 1380.85 L625.85 1380.85 L632.15 1380.85 L638.45 1380.85 L644.75 1380.85 L651.05 1380.85 L657.35 1380.85 L663.65 1380.85 L669.95 1380.85 L676.24 1293.09 L682.54 937.29 L688.84 1402.2 L695.14 1380.85 L701.44 1380.85 L707.74 1380.85 L714.04 1380.85 L720.34 1380.85 L726.64 1380.85 L732.94 1380.85 L739.24 1380.85 L745.54 1380.85 L751.84 1293.09 L758.14 937.29 L764.43 1402.2 L770.73 1380.85 L777.03 1380.85 L783.33 1380.85 L789.63 1380.85 L795.93 1380.85 L802.23 1380.85 L808.53 1380.85 L814.83 1380.85 L821.13 1380.85 L827.43 1293.09 L833.73 937.29 L840.03 1402.2 L846.33 1380.85 L852.62 1380.85 L858.92 1380.85 L865.22 1380.85 L871.52 1380.85 L877.82 1380.85 L884.12 1380.85 L890.42 1380.85 L896.72 1380.85 L903.02 1293.09 L909.32 937.29 L915.62 1402.2 L921.92 1380.85 L928.22 1380.85 L934.52 1380.85 L940.82 1380.85 L947.11 1380.85 L953.41 1380.85 L959.71 1380.85 L966.01 1380.85 L972.31 1380.85 L978.61 1293.09 L984.91 937.29 L991.21 1402.2 L997.51 1380.85 L1003.81 1380.85 L1010.11 1380.85 L1016.41 1380.85 L1022.71 1380.85 L1029.01 1380.85 L1035.3 1380.85 L1041.6 1380.85 L1047.9 1380.85 L1054.2 1293.09 L1060.5 937.29 L1066.8 1402.2 L1073.1 1380.85 L1079.4 1380.85 L1085.7 1380.85 L1092 1380.85 L1098.3 1380.85 L1104.6 1380.85 L1110.9 1380.85 L1117.2 1380.85 L1123.5 1380.85 L1129.79 1293.09 L1136.09 937.29 L1142.39 1402.2 L1148.69 1380.85 L1154.99 1380.85 L1161.29 1380.85 L1167.59 1380.85 L1173.89 1380.85 L1180.19 1380.85 L1186.49 1380.85 L1192.79 1380.85 L1199.09 1380.85 L1205.39 1293.09 L1211.69 937.29 L1217.98 1402.2 L1224.28 1380.85 L1230.58 1380.85 L1236.88 1380.85 L1243.18 1380.85 L1249.48 1380.85 L1255.78 1380.85 L1262.08 1380.85 L1268.38 1380.85 L1274.68 1380.85 L1280.98 1293.09 L1287.28 937.29 L1293.58 1402.2 L1299.88 1380.85 L1306.17 1380.85 L1312.47 1380.85 L1318.77 1380.85 L1325.07 1380.85 L1331.37 1380.85 L1337.67 1380.85 L1343.97 1380.85 L1350.27 1380.85 L1356.57 1293.09 L1362.87 937.29 L1369.17 1402.2 L1375.47 1380.85 L1381.77 1380.85 L1388.07 1380.85 L1394.37 1380.85 L1400.66 1380.85 L1406.96 1380.85 L1413.26 1380.85 L1419.56 1380.85 L1425.86 1380.85 L1432.16 1293.09 L1438.46 937.29 L1444.76 1402.2 L1451.06 1380.85 L1457.36 1380.85 L1463.66 1380.85 L1469.96 1380.85 L1476.26 1380.85 L1482.56 1380.85 L1488.85 1380.85 L1495.15 1380.85 L1501.45 1380.85 L1507.75 1293.09 L1514.05 937.29 L1520.35 1402.2 L1526.65 1380.85 L1532.95 1380.85 L1539.25 1380.85 L1545.55 1380.85 L1551.85 1380.85 L1558.15 1380.85 L1564.45 1380.85 L1570.75 1380.85 L1577.05 1380.85 L1583.34 1293.09 L1589.64 937.29 L1595.94 1402.2 L1602.24 1380.85 L1608.54 1380.85 L1614.84 1380.85 L1621.14 1380.85 L1627.44 1380.85 L1633.74 1380.85 L1640.04 1380.85 L1646.34 1380.85 L1652.64 1380.85 L1658.94 1293.09 L1665.24 937.29 L1671.53 1402.2 L1677.83 1380.85 L1684.13 1380.85 L1690.43 1380.85 L1696.73 1380.85 L1703.03 1380.85 L1709.33 1380.85 L1715.63 1380.85 L1721.93 1380.85 L1728.23 1380.85 L1734.53 1293.09 L1740.83 937.29 L1747.13 1402.2 L1753.43 1380.85 L1759.72 1380.85 L1766.02 1380.85 L1772.32 1380.85 L1778.62 1380.85 L1784.92 1380.85 L1791.22 1380.85 L1797.52 1380.85 L1803.82 1380.85 L1810.12 1293.09 L1816.42 937.29 L1822.72 1402.2 L1829.02 1380.85 L1835.32 1380.85 L1841.62 1380.85 L1847.92 1380.85 L1854.21 1380.85 L1860.51 1380.85 L1866.81 1380.85 L1873.11 1380.85 L1879.41 1380.85 L1885.71 1293.09 L1892.01 937.29 L1898.31 1402.2 L1904.61 1380.85 L1910.91 1380.85 L1917.21 1380.85 L1923.51 1380.85 L1929.81 1380.85 L1936.11 1380.85 L1942.4 1380.85 L1948.7 1380.85 L1955 1380.85 L1961.3 1293.09 L1967.6 937.29 L1973.9 1402.2 L1980.2 1380.85" fill="none" stroke="#f5de55" stroke-width="2" stroke-linejoin="round"/><text x="258.3" y="1439" text-anchor="middle" class="ax">16:00</text><text x="409.5" y="1439" text-anchor="middle" class="ax">18:00</text><text x="560.7" y="1439" text-anchor="middle" class="ax">20:00</text><text x="711.9" y="1439" text-anchor="middle" class="ax">22:00</text><text x="863.1" y="1439" text-anchor="middle" class="ax">00:00</text><text x="1014.3" y="1439" text-anchor="middle" class="ax">02:00</text><text x="1165.5" y="1439" text-anchor="middle" class="ax">04:00</text><text x="1316.7" y="1439" text-anchor="middle" class="ax">06:00</text><text x="1467.9" y="1439" text-anchor="middle" class="ax">08:00</text><text x="1619.1" y="1439" text-anchor="middle" class="ax">10:00</text><text x="1770.3" y="1439" text-anchor="middle" class="ax">12:00</text><text x="1921.5" y="1439" text-anchor="middle" class="ax">14:00</text><g class="info"><circle cx="391" cy="815.9" r="12.1" fill="none" stroke="#bcbec3" stroke-width="2.5"/><circle cx="391" cy="811.6999999999999" r="1.75" fill="#bcbec3"/><rect x="389.5" y="815.3" width="2.9" height="6.6" rx="1.4" fill="#bcbec3"/></g></svg><div class="title">Connection Wait Time</div><div class="legend"><div class="li"><span class="sw" style="background:#87c076"></span>Avg Wait Time (s)</div><div class="li"><span class="sw" style="background:#f5de55"></span>Max Wait Time (s)</div></div></div><div class="panel" style="left:2036px;top:782px"><svg class="chart" width="1996" height="744" viewBox="2036 782 1996 744" font-family="Liberation Sans, sans-serif"><line x1="2199.7" y1="880.5" x2="2199.7" y2="1410" stroke="#252e3c" stroke-width="1.25"/><line x1="2357.06" y1="880.5" x2="2357.06" y2="1410" stroke="#252e3c" stroke-width="1.25"/><line x1="2514.42" y1="880.5" x2="2514.42" y2="1410" stroke="#252e3c" stroke-width="1.25"/><line x1="2671.78" y1="880.5" x2="2671.78" y2="1410" stroke="#252e3c" stroke-width="1.25"/><line x1="2829.14" y1="880.5" x2="2829.14" y2="1410" stroke="#252e3c" stroke-width="1.25"/><line x1="2986.5" y1="880.5" x2="2986.5" y2="1410" stroke="#252e3c" stroke-width="1.25"/><line x1="3143.86" y1="880.5" x2="3143.86" y2="1410" stroke="#252e3c" stroke-width="1.25"/><line x1="3301.22" y1="880.5" x2="3301.22" y2="1410" stroke="#252e3c" stroke-width="1.25"/><line x1="3458.58" y1="880.5" x2="3458.58" y2="1410" stroke="#252e3c" stroke-width="1.25"/><line x1="3615.94" y1="880.5" x2="3615.94" y2="1410" stroke="#252e3c" stroke-width="1.25"/><line x1="3773.3" y1="880.5" x2="3773.3" y2="1410" stroke="#252e3c" stroke-width="1.25"/><line x1="3930.66" y1="880.5" x2="3930.66" y2="1410" stroke="#252e3c" stroke-width="1.25"/><line x1="2110.6" y1="1402" x2="3998.8" y2="1402" stroke="#252e3c" stroke-width="1.25"/><text x="2099.2" y="1409" text-anchor="end" class="ax">0</text><line x1="2110.6" y1="1321.8" x2="3998.8" y2="1321.8" stroke="#252e3c" stroke-width="1.25"/><text x="2099.2" y="1328.8" text-anchor="end" class="ax">0.1</text><line x1="2110.6" y1="1241.6" x2="3998.8" y2="1241.6" stroke="#252e3c" stroke-width="1.25"/><text x="2099.2" y="1248.6" text-anchor="end" class="ax">0.2</text><line x1="2110.6" y1="1161.4" x2="3998.8" y2="1161.4" stroke="#252e3c" stroke-width="1.25"/><text x="2099.2" y="1168.4" text-anchor="end" class="ax">0.3</text><line x1="2110.6" y1="1081.2" x2="3998.8" y2="1081.2" stroke="#252e3c" stroke-width="1.25"/><text x="2099.2" y="1088.2" text-anchor="end" class="ax">0.4</text><line x1="2110.6" y1="1001" x2="3998.8" y2="1001" stroke="#252e3c" stroke-width="1.25"/><text x="2099.2" y="1008" text-anchor="end" class="ax">0.5</text><line x1="2110.6" y1="920.8" x2="3998.8" y2="920.8" stroke="#252e3c" stroke-width="1.25"/><text x="2099.2" y="927.8" text-anchor="end" class="ax">0.6</text><path d="M2110.6 1402 L2117.16 1402 L2123.71 1402 L2130.27 1402 L2136.82 1402 L2143.38 1402 L2149.94 1402 L2156.49 1402 L2163.05 1402 L2169.61 1402 L2176.16 1402 L2182.72 1402 L2189.28 1402 L2195.83 1402 L2202.39 1402 L2208.94 1402 L2215.5 1402 L2222.06 1402 L2228.61 1402 L2235.17 1402 L2241.72 1402 L2248.28 1402 L2254.84 1402 L2261.39 1402 L2267.95 1402 L2274.51 1402 L2281.06 1402 L2287.62 1402 L2294.18 1402 L2300.73 1402 L2307.29 1402 L2313.84 1402 L2320.4 1402 L2326.96 1402 L2333.51 1402 L2340.07 1402 L2346.62 1402 L2353.18 1402 L2359.74 1402 L2366.29 1402 L2372.85 1402 L2379.41 1402 L2385.96 1402 L2392.52 1402 L2399.07 1402 L2405.63 1402 L2412.19 1402 L2418.74 1402 L2425.3 1402 L2431.86 1402 L2438.41 1402 L2444.97 1402 L2451.53 1402 L2458.08 1402 L2464.64 1402 L2471.19 1402 L2477.75 1402 L2484.31 1402 L2490.86 1402 L2497.42 1402 L2503.97 1402 L2510.53 1402 L2517.09 1402 L2523.64 1402 L2530.2 1402 L2536.76 1402 L2543.31 1402 L2549.87 1402 L2556.43 1402 L2562.98 1402 L2569.54 1402 L2576.09 1402 L2582.65 1402 L2589.21 1402 L2595.76 1402 L2602.32 1402 L2608.88 1402 L2615.43 1402 L2621.99 1402 L2628.54 1402 L2635.1 1402 L2641.66 1402 L2648.21 1402 L2654.77 1402 L2661.32 1402 L2667.88 1402 L2674.44 1402 L2680.99 1402 L2687.55 1402 L2694.11 1402 L2700.66 1402 L2707.22 1402 L2713.78 1402 L2720.33 1402 L2726.89 1402 L2733.44 1402 L2740 1402 L2746.56 1402 L2753.11 1402 L2759.67 1402 L2766.22 1402 L2772.78 1402 L2779.34 1402 L2785.89 1402 L2792.45 1402 L2799.01 1402 L2805.56 1402 L2812.12 1402 L2818.68 1402 L2825.23 1402 L2831.79 1402 L2838.34 1402 L2844.9 1402 L2851.46 1402 L2858.01 1402 L2864.57 1402 L2871.12 1402 L2877.68 1402 L2884.24 1402 L2890.79 1402 L2897.35 1402 L2903.91 1402 L2910.46 1402 L2917.02 1402 L2923.57 1402 L2930.13 1402 L2936.69 1402 L2943.24 1402 L2949.8 1402 L2956.36 1402 L2962.91 1402 L2969.47 1402 L2976.03 1402 L2982.58 1402 L2989.14 1402 L2995.69 1402 L3002.25 1402 L3008.81 1402 L3015.36 1402 L3021.92 1402 L3028.48 1402 L3035.03 1402 L3041.59 1402 L3048.14 1402 L3054.7 1402 L3061.26 1402 L3067.81 1402 L3074.37 1402 L3080.93 1402 L3087.48 1402 L3094.04 1402 L3100.59 1402 L3107.15 1402 L3113.71 1402 L3120.26 1402 L3126.82 1402 L3133.38 1402 L3139.93 1402 L3146.49 1402 L3153.04 1402 L3159.6 1402 L3166.16 1402 L3172.71 1402 L3179.27 1402 L3185.82 1402 L3192.38 1402 L3198.94 1402 L3205.49 1402 L3212.05 1402 L3218.61 1402 L3225.16 1402 L3231.72 1402 L3238.28 1402 L3244.83 1402 L3251.39 1402 L3257.94 1402 L3264.5 1402 L3271.06 1402 L3277.61 1402 L3284.17 1402 L3290.73 1402 L3297.28 1402 L3303.84 1402 L3310.39 1402 L3316.95 1402 L3323.51 1402 L3330.06 1402 L3336.62 1402 L3343.18 1402 L3349.73 1402 L3356.29 1402 L3362.84 1402 L3369.4 1402 L3375.96 1402 L3382.51 1402 L3389.07 1402 L3395.62 1402 L3402.18 1402 L3408.74 1402 L3415.29 1402 L3421.85 1402 L3428.41 1402 L3434.96 1402 L3441.52 1402 L3448.08 1402 L3454.63 1402 L3461.19 1402 L3467.74 1402 L3474.3 1402 L3480.86 1402 L3487.41 1402 L3493.97 1402 L3500.53 1402 L3507.08 1402 L3513.64 1402 L3520.19 1402 L3526.75 1402 L3533.31 1402 L3539.86 1402 L3546.42 1402 L3552.98 1402 L3559.53 1402 L3566.09 1402 L3572.64 1402 L3579.2 1402 L3585.76 1402 L3592.31 1402 L3598.87 1402 L3605.43 1402 L3611.98 1402 L3618.54 1402 L3625.09 1402 L3631.65 1402 L3638.21 1402 L3644.76 1402 L3651.32 1402 L3657.88 1402 L3664.43 1402 L3670.99 1402 L3677.54 1402 L3684.1 1402 L3690.66 1402 L3697.21 1402 L3703.77 1402 L3710.33 1402 L3716.88 1402 L3723.44 1402 L3729.99 1402 L3736.55 1402 L3743.11 1402 L3749.66 1402 L3756.22 1402 L3762.78 1402 L3769.33 1402 L3775.89 1402 L3782.44 1402 L3789 1402 L3795.56 1402 L3802.11 1402 L3808.67 1402 L3815.23 1402 L3821.78 1402 L3828.34 1402 L3834.89 1402 L3841.45 1402 L3848.01 1402 L3854.56 1402 L3861.12 1402 L3867.68 1402 L3874.23 1402 L3880.79 1402 L3887.34 1402 L3893.9 1402 L3900.46 1402 L3907.01 1402 L3913.57 1402 L3920.12 1402 L3926.68 1402 L3933.24 1402 L3939.79 1402 L3946.35 1402 L3952.91 1402 L3959.46 1402 L3966.02 1402 L3972.58 1402 L3979.13 1402 L3985.69 1402 L3992.24 1402" fill="none" stroke="#6494f0" stroke-width="2" stroke-linejoin="round"/><path d="M2110.6 1402 L2117.16 1402 L2123.71 1402 L2130.27 1402 L2136.82 1402 L2143.38 1402 L2149.94 1402 L2156.49 1402 L2163.05 1402 L2169.61 1402 L2176.16 1402 L2182.72 1402 L2189.28 1402 L2195.83 1402 L2202.39 1402 L2208.94 1402 L2215.5 1402 L2222.06 1402 L2228.61 1402 L2235.17 1402 L2241.72 1402 L2248.28 1402 L2254.84 1402 L2261.39 1402 L2267.95 1402 L2274.51 1402 L2281.06 1402 L2287.62 1402 L2294.18 1402 L2300.73 1402 L2307.29 1402 L2313.84 1402 L2320.4 1402 L2326.96 1402 L2333.51 1402 L2340.07 1402 L2346.62 1402 L2353.18 1402 L2359.74 1402 L2366.29 1402 L2372.85 1402 L2379.41 1402 L2385.96 1402 L2392.52 1402 L2399.07 1402 L2405.63 1402 L2412.19 1402 L2418.74 1402 L2425.3 1402 L2431.86 1402 L2438.41 1402 L2444.97 1402 L2451.53 1402 L2458.08 1402 L2464.64 1402 L2471.19 1402 L2477.75 1402 L2484.31 1402 L2490.86 1402 L2497.42 1402 L2503.97 1402 L2510.53 1402 L2517.09 1402 L2523.64 1402 L2530.2 1402 L2536.76 1402 L2543.31 1402 L2549.87 1402 L2556.43 1402 L2562.98 1402 L2569.54 1402 L2576.09 1402 L2582.65 1402 L2589.21 1402 L2595.76 1402 L2602.32 1402 L2608.88 1402 L2615.43 1402 L2621.99 1402 L2628.54 1402 L2635.1 1402 L2641.66 1402 L2648.21 1402 L2654.77 1402 L2661.32 1402 L2667.88 1402 L2674.44 1402 L2680.99 1402 L2687.55 1402 L2694.11 1402 L2700.66 1402 L2707.22 1402 L2713.78 1402 L2720.33 1402 L2726.89 1402 L2733.44 1402 L2740 1402 L2746.56 1402 L2753.11 1402 L2759.67 1402 L2766.22 1402 L2772.78 1402 L2779.34 1402 L2785.89 1402 L2792.45 1402 L2799.01 1402 L2805.56 1402 L2812.12 1402 L2818.68 1402 L2825.23 1402 L2831.79 1402 L2838.34 1402 L2844.9 1402 L2851.46 1402 L2858.01 1402 L2864.57 1402 L2871.12 1402 L2877.68 1402 L2884.24 1402 L2890.79 1402 L2897.35 1402 L2903.91 1402 L2910.46 1402 L2917.02 1402 L2923.57 1402 L2930.13 1402 L2936.69 1402 L2943.24 1402 L2949.8 1402 L2956.36 1402 L2962.91 1402 L2969.47 1402 L2976.03 1402 L2982.58 1402 L2989.14 1402 L2995.69 1402 L3002.25 1402 L3008.81 1402 L3015.36 1402 L3021.92 1402 L3028.48 1402 L3035.03 1402 L3041.59 1402 L3048.14 1402 L3054.7 1402 L3061.26 1402 L3067.81 1402 L3074.37 1402 L3080.93 1402 L3087.48 1402 L3094.04 1402 L3100.59 1402 L3107.15 1402 L3113.71 1402 L3120.26 1402 L3126.82 1402 L3133.38 1402 L3139.93 1402 L3146.49 1402 L3153.04 1402 L3159.6 1402 L3166.16 1402 L3172.71 1402 L3179.27 1402 L3185.82 1402 L3192.38 1402 L3198.94 1402 L3205.49 1402 L3212.05 1402 L3218.61 1402 L3225.16 1402 L3231.72 1402 L3238.28 1402 L3244.83 1393.98 L3251.39 1402 L3257.94 1402 L3264.5 1402 L3271.06 1402 L3277.61 1402 L3284.17 1402 L3290.73 1402 L3297.28 1402 L3303.84 1402 L3310.39 1402 L3316.95 1402 L3323.51 1402 L3330.06 1402 L3336.62 1402 L3343.18 1402 L3349.73 1402 L3356.29 1402 L3362.84 1402 L3369.4 1402 L3375.96 1402 L3382.51 1402 L3389.07 1402 L3395.62 1402 L3402.18 1402 L3408.74 1402 L3415.29 1402 L3421.85 1402 L3428.41 1402 L3434.96 1402 L3441.52 1402 L3448.08 1402 L3454.63 1402 L3461.19 1402 L3467.74 1402 L3474.3 1402 L3480.86 1402 L3487.41 1402 L3493.97 1402 L3500.53 1402 L3507.08 1402 L3513.64 1402 L3520.19 1402 L3526.75 1402 L3533.31 1402 L3539.86 1402 L3546.42 1402 L3552.98 1402 L3559.53 1402 L3566.09 1402 L3572.64 1402 L3579.2 1402 L3585.76 1402 L3592.31 1402 L3598.87 1402 L3605.43 1402 L3611.98 1402 L3618.54 1402 L3625.09 1402 L3631.65 1402 L3638.21 1402 L3644.76 1402 L3651.32 1402 L3657.88 1402 L3664.43 1402 L3670.99 1402 L3677.54 1402 L3684.1 1402 L3690.66 1402 L3697.21 1402 L3703.77 1402 L3710.33 1402 L3716.88 1402 L3723.44 1402 L3729.99 1402 L3736.55 1402 L3743.11 1402 L3749.66 1402 L3756.22 1402 L3762.78 1402 L3769.33 1402 L3775.89 1402 L3782.44 1402 L3789 1402 L3795.56 1402 L3802.11 1402 L3808.67 1402 L3815.23 1402 L3821.78 1402 L3828.34 1402 L3834.89 1402 L3841.45 1402 L3848.01 1402 L3854.56 1402 L3861.12 1402 L3867.68 1402 L3874.23 1402 L3880.79 1402 L3887.34 1402 L3893.9 1402 L3900.46 1402 L3907.01 1402 L3913.57 1402 L3920.12 1402 L3926.68 1402 L3933.24 1402 L3939.79 1402 L3946.35 1402 L3952.91 1402 L3959.46 1402 L3966.02 1402 L3972.58 1402 L3979.13 1402 L3985.69 1402 L3992.24 1402" fill="none" stroke="#f5a04b" stroke-width="2" stroke-linejoin="round"/><path d="M2110.6 1402 L2117.16 960.02 L2123.71 963.39 L2130.27 963.39 L2136.82 963.39 L2143.38 960.02 L2149.94 963.39 L2156.49 963.39 L2163.05 934.27 L2169.61 960.02 L2176.16 963.39 L2182.72 966.91 L2189.28 963.39 L2195.83 963.39 L2202.39 960.02 L2208.94 963.39 L2215.5 963.39 L2222.06 963.39 L2228.61 960.02 L2235.17 963.39 L2241.72 936.04 L2248.28 963.39 L2254.84 960.02 L2261.39 963.39 L2267.95 963.39 L2274.51 963.39 L2281.06 960.02 L2287.62 960.02 L2294.18 963.39 L2300.73 963.39 L2307.29 960.02 L2313.84 963.39 L2320.4 936.04 L2326.96 963.39 L2333.51 960.02 L2340.07 963.39 L2346.62 966.91 L2353.18 963.39 L2359.74 960.02 L2366.29 963.39 L2372.85 963.39 L2379.41 963.39 L2385.96 960.02 L2392.52 963.39 L2399.07 930.83 L2405.63 966.91 L2412.19 963.39 L2418.74 960.02 L2425.3 963.39 L2431.86 963.39 L2438.41 960.02 L2444.97 960.02 L2451.53 963.39 L2458.08 963.39 L2464.64 963.39 L2471.19 960.02 L2477.75 936.04 L2484.31 963.39 L2490.86 963.39 L2497.42 960.02 L2503.97 963.39 L2510.53 966.91 L2517.09 963.39 L2523.64 960.02 L2530.2 963.39 L2536.76 960.02 L2543.31 963.39 L2549.87 960.02 L2556.43 936.04 L2562.98 960.02 L2569.54 966.91 L2576.09 957.69 L2582.65 966.91 L2589.21 960.02 L2595.76 963.39 L2602.32 960.02 L2608.88 963.39 L2615.43 966.91 L2621.99 963.39 L2628.54 963.39 L2635.1 930.83 L2641.66 963.39 L2648.21 963.39 L2654.77 963.39 L2661.32 963.39 L2667.88 960.02 L2674.44 963.39 L2680.99 963.39 L2687.55 960.02 L2694.11 963.39 L2700.66 963.39 L2707.22 963.39 L2713.78 930.83 L2720.33 963.39 L2726.89 963.39 L2733.44 963.39 L2740 974.21 L2746.56 963.39 L2753.11 963.39 L2759.67 963.39 L2766.22 960.02 L2772.78 963.39 L2779.34 966.91 L2785.89 963.39 L2792.45 928.34 L2799.01 963.39 L2805.56 963.39 L2812.12 963.39 L2818.68 960.02 L2825.23 963.39 L2831.79 963.39 L2838.34 963.39 L2844.9 960.02 L2851.46 963.39 L2858.01 963.39 L2864.57 963.39 L2871.12 930.83 L2877.68 963.39 L2884.24 963.39 L2890.79 963.39 L2897.35 963.39 L2903.91 960.02 L2910.46 963.39 L2917.02 963.39 L2923.57 963.39 L2930.13 960.02 L2936.69 966.91 L2943.24 963.39 L2949.8 934.27 L2956.36 960.02 L2962.91 963.39 L2969.47 963.39 L2976.03 963.39 L2982.58 963.39 L2989.14 963.39 L2995.69 963.39 L3002.25 963.39 L3008.81 960.02 L3015.36 963.39 L3021.92 963.39 L3028.48 930.83 L3035.03 960.02 L3041.59 966.91 L3048.14 963.39 L3054.7 963.39 L3061.26 963.39 L3067.81 960.02 L3074.37 963.39 L3080.93 966.91 L3087.48 960.02 L3094.04 963.39 L3100.59 963.39 L3107.15 934.27 L3113.71 963.39 L3120.26 960.02 L3126.82 963.39 L3133.38 966.91 L3139.93 963.39 L3146.49 960.02 L3153.04 966.91 L3159.6 963.39 L3166.16 963.39 L3172.71 960.02 L3179.27 963.39 L3185.82 934.27 L3192.38 963.39 L3198.94 963.39 L3205.49 960.02 L3212.05 963.39 L3218.61 963.39 L3225.16 960.02 L3231.72 963.39 L3238.28 963.39 L3244.83 966.91 L3251.39 960.02 L3257.94 966.91 L3264.5 930.83 L3271.06 960.02 L3277.61 963.39 L3284.17 963.39 L3290.73 963.39 L3297.28 960.02 L3303.84 963.39 L3310.39 963.39 L3316.95 963.39 L3323.51 963.39 L3330.06 963.39 L3336.62 963.39 L3343.18 930.83 L3349.73 960.02 L3356.29 966.91 L3362.84 963.39 L3369.4 963.39 L3375.96 960.02 L3382.51 963.39 L3389.07 963.39 L3395.62 963.39 L3402.18 963.39 L3408.74 963.39 L3415.29 960.02 L3421.85 934.27 L3428.41 966.91 L3434.96 957.69 L3441.52 963.39 L3448.08 963.39 L3454.63 963.39 L3461.19 960.02 L3467.74 960.02 L3474.3 966.91 L3480.86 963.39 L3487.41 960.02 L3493.97 963.39 L3500.53 934.27 L3507.08 963.39 L3513.64 960.02 L3520.19 963.39 L3526.75 963.39 L3533.31 963.39 L3539.86 963.39 L3546.42 963.39 L3552.98 963.39 L3559.53 963.39 L3566.09 960.02 L3572.64 963.39 L3579.2 934.27 L3585.76 966.91 L3592.31 960.02 L3598.87 963.39 L3605.43 963.39 L3611.98 963.39 L3618.54 960.02 L3625.09 963.39 L3631.65 963.39 L3638.21 963.39 L3644.76 960.02 L3651.32 966.91 L3657.88 934.27 L3664.43 963.39 L3670.99 960.02 L3677.54 963.39 L3684.1 963.39 L3690.66 960.02 L3697.21 960.02 L3703.77 963.39 L3710.33 963.39 L3716.88 966.91 L3723.44 963.39 L3729.99 960.02 L3736.55 934.27 L3743.11 963.39 L3749.66 963.39 L3756.22 960.02 L3762.78 963.39 L3769.33 963.39 L3775.89 966.91 L3782.44 960.02 L3789 963.39 L3795.56 963.39 L3802.11 963.39 L3808.67 960.02 L3815.23 934.27 L3821.78 963.39 L3828.34 963.39 L3834.89 963.39 L3841.45 963.39 L3848.01 963.39 L3854.56 963.39 L3861.12 960.02 L3867.68 963.39 L3874.23 963.39 L3880.79 960.02 L3887.34 963.39 L3893.9 930.83 L3900.46 966.91 L3907.01 963.39 L3913.57 963.39 L3920.12 957.69 L3926.68 963.39 L3933.24 966.91 L3939.79 963.39 L3946.35 960.02 L3952.91 963.39 L3959.46 963.39 L3966.02 963.39 L3972.58 930.83 L3979.13 963.39 L3985.69 963.39 L3992.24 966.91" fill="none" stroke="#87c076" stroke-width="2" stroke-linejoin="round"/><text x="2199.7" y="1439" text-anchor="middle" class="ax">16:00</text><text x="2357.06" y="1439" text-anchor="middle" class="ax">18:00</text><text x="2514.42" y="1439" text-anchor="middle" class="ax">20:00</text><text x="2671.78" y="1439" text-anchor="middle" class="ax">22:00</text><text x="2829.14" y="1439" text-anchor="middle" class="ax">00:00</text><text x="2986.5" y="1439" text-anchor="middle" class="ax">02:00</text><text x="3143.86" y="1439" text-anchor="middle" class="ax">04:00</text><text x="3301.22" y="1439" text-anchor="middle" class="ax">06:00</text><text x="3458.58" y="1439" text-anchor="middle" class="ax">08:00</text><text x="3615.94" y="1439" text-anchor="middle" class="ax">10:00</text><text x="3773.3" y="1439" text-anchor="middle" class="ax">12:00</text><text x="3930.66" y="1439" text-anchor="middle" class="ax">14:00</text><g class="info"><circle cx="2292" cy="815.9" r="12.1" fill="none" stroke="#bcbec3" stroke-width="2.5"/><circle cx="2292" cy="811.6999999999999" r="1.75" fill="#bcbec3"/><rect x="2290.5" y="815.3" width="2.9" height="6.6" rx="1.4" fill="#bcbec3"/></g></svg><div class="title">Pool Turnover</div><div class="legend"><div class="li"><span class="sw" style="background:#87c076"></span>New Sessions/sec</div><div class="li"><span class="sw" style="background:#f5de55"></span>Abandoned/sec</div><div class="li"><span class="sw" style="background:#6494f0"></span>Fatal/sec</div><div class="li"><span class="sw" style="background:#f5a04b"></span>Killed/sec</div></div></div></body></html>
